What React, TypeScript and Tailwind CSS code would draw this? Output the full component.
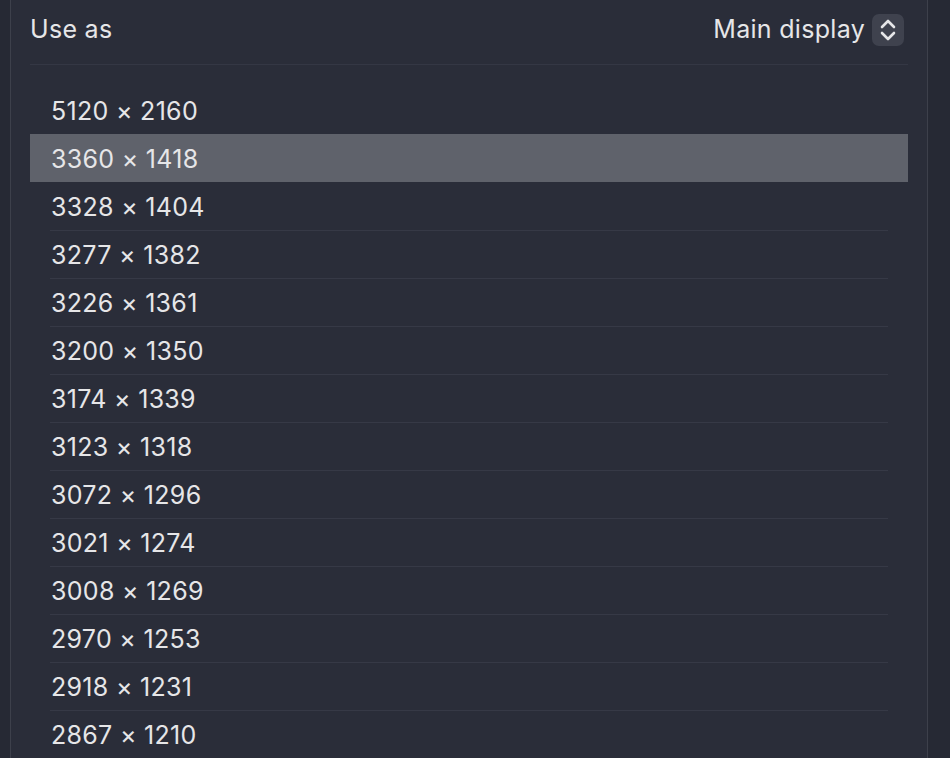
const resolutions = [
  '5120 × 2160',
  '3360 × 1418',
  '3328 × 1404',
  '3277 × 1382',
  '3226 × 1361',
  '3200 × 1350',
  '3174 × 1339',
  '3123 × 1318',
  '3072 × 1296',
  '3021 × 1274',
  '3008 × 1269',
  '2970 × 1253',
  '2918 × 1231',
  '2867 × 1210',
];

const selected = 1;

export default function App() {
  return (
    <div
      className="h-[758px] w-[950px] overflow-hidden bg-[#262934] pl-[10px] text-[#e6e6e8]"
      style={{ fontFamily: 'Inter, "Noto Sans", sans-serif' }}
    >
      <div className="h-full w-[918px] border-x border-[#3d404b] bg-[#2a2d39] pl-[19px] pr-[19px]">
        {/* Header row */}
        <div className="flex h-[65px] items-center justify-between border-b border-[#343744] pb-[4px] pr-[4px]">
          <span className="text-[25px] tracking-[0.012em]">Use as</span>
          <div className="flex items-center gap-[7px]">
            <span className="text-[25px] tracking-[0.012em]">Main display</span>
            <div className="h-[32px] w-[32px] rounded-[7px] bg-[#3f424e]">
              <svg viewBox="0 0 32 32" className="h-[32px] w-[32px]" fill="none" stroke="#e6e6e8" strokeWidth={2.6} strokeLinecap="round" strokeLinejoin="round">
                <path d="M10 13 L16 7 L22 13" />
                <path d="M10 19 L16 25 L22 19" />
              </svg>
            </div>
          </div>
        </div>

        {/* Resolution list */}
        <div className="pt-[21px]">
          {resolutions.map((r, i) => {
            const isSel = i === selected;
            const showLine = i > 0 && i !== selected && i - 1 !== selected;
            return (
              <div key={r} className={isSel ? 'bg-[#5f626b]' : ''}>
                <div className={showLine ? 'mx-[20px] h-px bg-[#363946]' : 'h-px'} />
                <div className="flex h-[47px] items-center pl-[21px] pt-[2px] text-[25px] tracking-[0.012em]">
                  {r}
                </div>
              </div>
            );
          })}
          <div className="mx-[20px] h-px bg-[#363946]" />
        </div>
      </div>
    </div>
  );
}
